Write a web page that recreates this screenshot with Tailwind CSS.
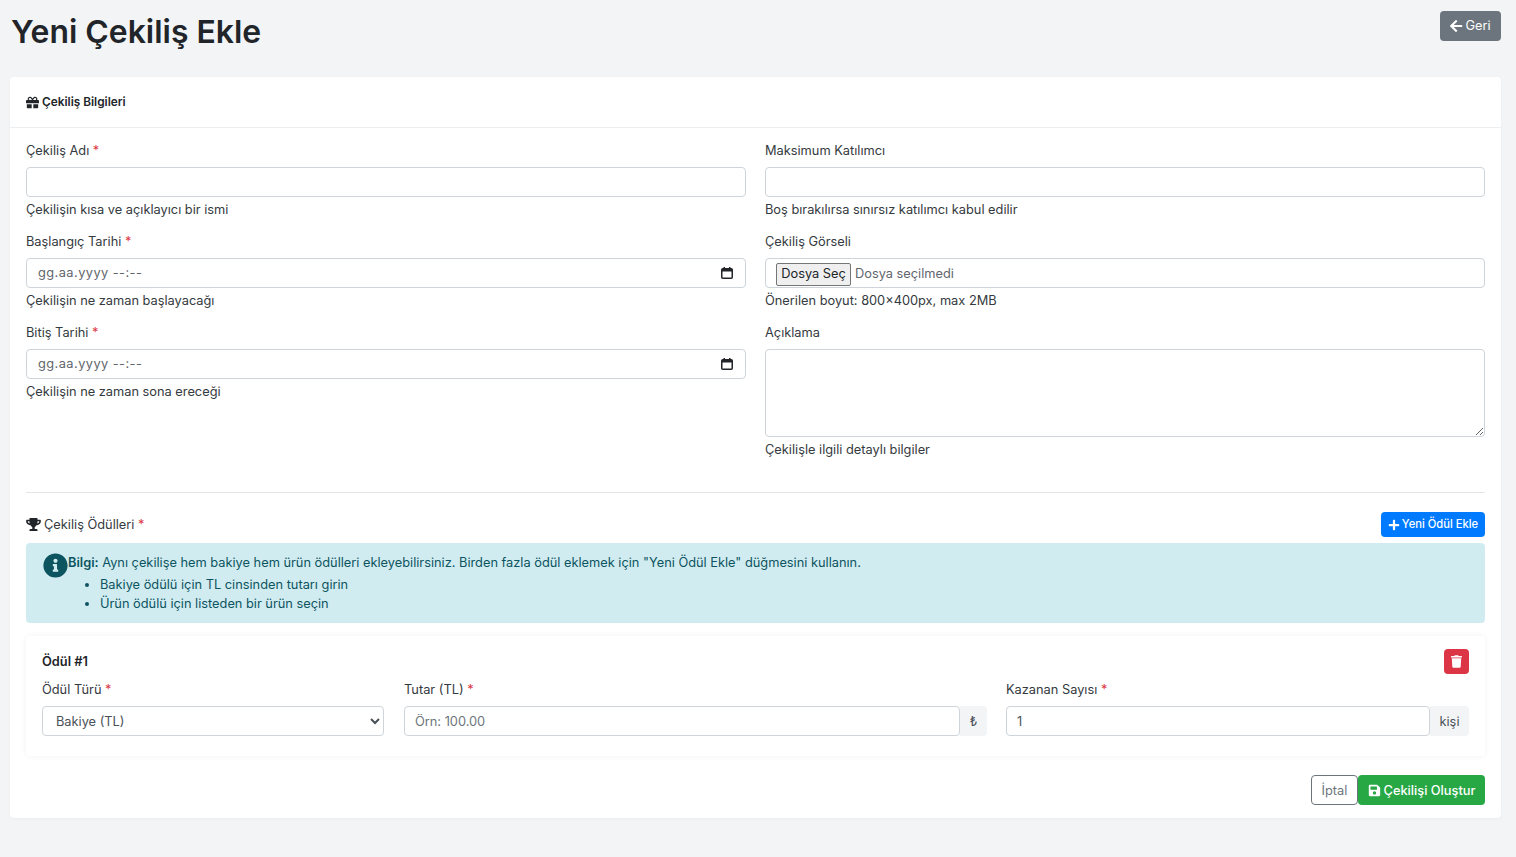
<!DOCTYPE html>
<html lang="tr">
<head>
  <meta charset="UTF-8">
  <title>Yeni Çekiliş Ekle</title>
  <script src="https://cdn.jsdelivr.net/npm/@tailwindcss/browser@4"></script>
</head>
<body class="bg-[#f3f4f6] min-h-screen font-['Inter',sans-serif] text-[12.8px] text-[#343a40]">
  <div class="pl-[10px] pr-[15px] h-[857px] overflow-hidden">
    <!-- page header -->
    <div class="flex justify-between items-start h-[77px]">
      <h1 class="text-[31.9px] leading-[38px] font-semibold text-[#212529] mt-[13px] pl-[1px]">Yeni Çekiliş Ekle</h1>
      <a href="#" class="mt-[11px] h-[30px] w-[61px] bg-[#6c757d] text-white rounded-[4px] flex items-center justify-center gap-[3px]">
        <svg class="w-[12.25px] h-[14px] fill-current" viewBox="0 0 448 512"><path d="M257.5 445.1l-22.2 22.2c-9.4 9.4-24.6 9.4-33.9 0L7 273c-9.4-9.4-9.4-24.6 0-33.9L201.4 44.7c9.4-9.4 24.6-9.4 33.9 0l22.2 22.2c9.5 9.5 9.3 25-.4 34.3L136.6 216H424c13.3 0 24 10.7 24 24v32c0 13.3-10.7 24-24 24H136.6l120.5 114.8c9.8 9.3 10 24.8.4 34.3z"/></svg>
        Geri
      </a>
    </div>

    <div class="bg-white rounded-[4px] shadow-[0_1px_3px_rgba(0,0,0,0.04)] h-[741px]">
      <div class="h-[51px] border-b border-[#edeef0] px-[16px] pt-[1px] flex items-center gap-[3px] text-[11.84px] font-semibold text-[#212529]">
        <svg class="w-[13px] h-[13px] fill-current" viewBox="0 0 512 512"><path d="M32 448c0 17.7 14.3 32 32 32h160V320H32v128zm256 32h160c17.7 0 32-14.3 32-32V320H288v160zm192-320h-42.1c6.2-12.1 10.1-25.5 10.1-40 0-48.5-39.5-88-88-88-41.6 0-68.5 21.3-103 68.3-34.5-47-61.4-68.3-103-68.3-48.5 0-88 39.5-88 88 0 14.5 3.8 27.9 10.1 40H32c-17.7 0-32 14.3-32 32v80c0 8.8 7.2 16 16 16h480c8.8 0 16-7.2 16-16v-80c0-17.7-14.3-32-32-32zm-326.1 0c-22.1 0-40-17.9-40-40s17.9-40 40-40c19.9 0 34.6 3.3 86.1 80h-86.1zm206.1 0h-86.1c51.4-76.5 65.7-80 86.1-80 22.1 0 40 17.9 40 40s-17.9 40-40 40z"/></svg>
        Çekiliş Bilgileri
      </div>

      <div class="px-[16px] pt-[13px]">
        <div class="grid grid-cols-2 gap-x-[19px] h-[351px]">
          <!-- left column -->
          <div>
            <div class="h-[91px]">
              <label class="block h-[18px] leading-[20px] mb-[8px]">Çekiliş Adı <span class="text-[#dc3545]">*</span></label>
              <input type="text" class="block w-full h-[30px] bg-white border border-[#ced4da] rounded-[4px] px-[11px]">
              <div class="mt-[3px] leading-[20px]">Çekilişin kısa ve açıklayıcı bir ismi</div>
            </div>
            <div class="h-[91px]">
              <label class="block h-[18px] leading-[20px] mb-[8px]">Başlangıç Tarihi <span class="text-[#dc3545]">*</span></label>
              <div class="flex items-center justify-between h-[30px] border border-[#ced4da] rounded-[4px] pl-[11px] pr-[12px] text-[#5f666d]">
                <span class="tracking-[0.45px]">gg.aa.yyyy --:--</span>
                <svg class="w-[12px] h-[12px]" viewBox="0 0 12 12"><rect x="0.75" y="1.75" width="10.5" height="9.5" rx="1" fill="none" stroke="#212529" stroke-width="1.5"/><rect x="1" y="2" width="10" height="2.5" fill="#212529"/><rect x="2.5" y="0" width="1.5" height="2" fill="#212529"/><rect x="8" y="0" width="1.5" height="2" fill="#212529"/></svg>
              </div>
              <div class="mt-[3px] leading-[20px]">Çekilişin ne zaman başlayacağı</div>
            </div>
            <div class="h-[91px]">
              <label class="block h-[18px] leading-[20px] mb-[8px]">Bitiş Tarihi <span class="text-[#dc3545]">*</span></label>
              <div class="flex items-center justify-between h-[30px] border border-[#ced4da] rounded-[4px] pl-[11px] pr-[12px] text-[#5f666d]">
                <span class="tracking-[0.45px]">gg.aa.yyyy --:--</span>
                <svg class="w-[12px] h-[12px]" viewBox="0 0 12 12"><rect x="0.75" y="1.75" width="10.5" height="9.5" rx="1" fill="none" stroke="#212529" stroke-width="1.5"/><rect x="1" y="2" width="10" height="2.5" fill="#212529"/><rect x="2.5" y="0" width="1.5" height="2" fill="#212529"/><rect x="8" y="0" width="1.5" height="2" fill="#212529"/></svg>
              </div>
              <div class="mt-[3px] leading-[20px]">Çekilişin ne zaman sona ereceği</div>
            </div>
          </div>
          <!-- right column -->
          <div>
            <div class="h-[91px]">
              <label class="block h-[18px] leading-[20px] mb-[8px]">Maksimum Katılımcı</label>
              <input type="text" class="block w-full h-[30px] bg-white border border-[#ced4da] rounded-[4px] px-[11px]">
              <div class="mt-[3px] leading-[20px]">Boş bırakılırsa sınırsız katılımcı kabul edilir</div>
            </div>
            <div class="h-[91px]">
              <label class="block h-[18px] leading-[20px] mb-[8px]">Çekiliş Görseli</label>
              <div class="flex items-center h-[30px] border border-[#ced4da] rounded-[4px] pl-[10px] pt-[2px] text-[#5f666d]">
                <button type="button" class="h-[23px] w-[75px] bg-[#efefef] border border-[#767676] rounded-[2px] text-[#212529] text-center">Dosya Seç</button>
                <span class="ml-[4px]">Dosya seçilmedi</span>
              </div>
              <div class="mt-[3px] leading-[20px]">Önerilen boyut: 800×400px, max 2MB</div>
            </div>
            <div>
              <label class="block h-[18px] leading-[20px] mb-[8px]">Açıklama</label>
              <textarea class="block w-full h-[88px] border border-[#ced4da] rounded-[4px] px-[11px] py-[5px]"></textarea>
              <div class="mt-[3px] leading-[20px]">Çekilişle ilgili detaylı bilgiler</div>
            </div>
          </div>
        </div>

        <hr class="border-[#e3e5e7]">

        <div class="flex justify-between items-center mt-[19px] h-[25px]">
          <div class="flex items-center gap-[3px] text-[#343a40]">
            <svg class="w-[15px] h-[13px] fill-[#212529]" viewBox="0 0 576 512"><path d="M552 64H448V24c0-13.3-10.7-24-24-24H152c-13.3 0-24 10.7-24 24v40H24C10.7 64 0 74.7 0 88v56c0 35.7 22.5 72.4 61.9 100.7 31.5 22.7 69.8 37.1 110 41.7C203.3 338.5 240 360 240 360v72h-48c-35.3 0-64 20.7-64 56v12c0 6.6 5.4 12 12 12h296c6.6 0 12-5.4 12-12v-12c0-35.3-28.7-56-64-56h-48v-72s36.7-21.5 68.1-73.6c40.3-4.6 78.6-19 110-41.7 39.3-28.3 61.9-65 61.9-100.7V88c0-13.3-10.7-24-24-24zM99.3 192.8C74.9 175.2 64 155.6 64 144v-16h64.2c1 32.6 5.8 61.2 12.8 86.2-15.1-5.2-29.2-12.4-41.7-21.4zM512 144c0 16.1-17.7 36.1-35.3 48.8-12.5 9-26.7 16.2-41.8 21.4 7-25 11.8-53.6 12.8-86.2H512v16z"/></svg>
            <span>Çekiliş Ödülleri <span class="text-[#dc3545]">*</span></span>
          </div>
          <button type="button" class="h-[25px] w-[104px] bg-[#007bff] text-white text-[11.2px] font-medium rounded-[4px] flex items-center justify-center gap-[2px]">
            <svg class="w-[12px] h-[12px] fill-current" viewBox="0 0 448 512"><path d="M416 208H272V64c0-17.67-14.33-32-32-32h-32c-17.67 0-32 14.33-32 32v144H32c-17.67 0-32 14.33-32 32v32c0 17.67 14.33 32 32 32h144v144c0 17.67 14.33 32 32 32h32c17.67 0 32-14.33 32-32V304h144c17.67 0 32-14.33 32-32v-32c0-17.67-14.33-32-32-32z"/></svg>
            Yeni Ödül Ekle
          </button>
        </div>

        <!-- info alert -->
        <div class="mt-[6px] h-[80px] bg-[#d1ecf1] text-[#0c5460] rounded-[4px] pl-[17px] pt-[10px] flex items-start">
          <svg class="w-[25px] h-[25px] shrink-0 fill-current" viewBox="0 0 512 512"><path d="M256 8C119.043 8 8 119.083 8 256c0 136.997 111.043 248 248 248s248-111.003 248-248C504 119.083 392.957 8 256 8zm0 110c23.196 0 42 18.804 42 42s-18.804 42-42 42-42-18.804-42-42 18.804-42 42-42zm56 254c0 6.627-5.373 12-12 12h-88c-6.627 0-12-5.373-12-12v-24c0-6.627 5.373-12 12-12h12v-64h-12c-6.627 0-12-5.373-12-12v-24c0-6.627 5.373-12 12-12h64c6.627 0 12 5.373 12 12v100h12c6.627 0 12 5.373 12 12v24z"/></svg>
          <div>
            <div class="leading-[20px]"><strong class="font-semibold">Bilgi:</strong> Aynı çekilişe hem bakiye hem ürün ödülleri ekleyebilirsiniz. Birden fazla ödül eklemek için "Yeni Ödül Ekle" düğmesini kullanın.</div>
            <ul class="list-disc pl-[32px] mt-[2px] leading-[19px]">
              <li>Bakiye ödülü için TL cinsinden tutarı girin</li>
              <li>Ürün ödülü için listeden bir ürün seçin</li>
            </ul>
          </div>
        </div>

        <!-- prize card -->
        <div class="mt-[13px] h-[120px] rounded-[4px] shadow-[0_0_6px_rgba(0,0,0,0.06)] px-[16px] pt-[13px]">
          <div class="flex justify-between items-center h-[25px]">
            <span class="font-semibold text-[#212529]">Ödül #1</span>
            <button type="button" class="w-[25px] h-[25px] bg-[#dc3545] text-white rounded-[4px] flex items-center justify-center">
              <svg class="w-[11px] h-[13px] fill-current" viewBox="0 0 448 512"><path d="M432 32H312l-9.4-18.7A24 24 0 0 0 281.1 0H166.8a23.72 23.72 0 0 0-21.4 13.3L136 32H16A16 16 0 0 0 0 48v32a16 16 0 0 0 16 16h416a16 16 0 0 0 16-16V48a16 16 0 0 0-16-16zM53.2 467a48 48 0 0 0 47.9 45h245.8a48 48 0 0 0 47.9-45L416 128H32z"/></svg>
            </button>
          </div>
          <div class="flex mt-[6px]">
            <div class="w-[342px] mr-[20px]">
              <label class="block h-[18px] leading-[20px] mb-[8px]">Ödül Türü <span class="text-[#dc3545]">*</span></label>
              <select class="block w-full h-[30px] bg-white border border-[#ced4da] rounded-[4px] pl-[9px] text-[#495057]">
                <option>Bakiye (TL)</option>
              </select>
            </div>
            <div class="w-[583px] mr-[19px]">
              <label class="block h-[18px] leading-[20px] mb-[8px]">Tutar (TL) <span class="text-[#dc3545]">*</span></label>
              <div class="flex h-[30px]">
                <input type="text" placeholder="Örn: 100.00" class="flex-1 min-w-0 border border-[#ced4da] rounded-[4px] px-[10px] pt-[1px] placeholder:text-[#6c757d]">
                <span class="w-[27px] pt-[1px] bg-[#f3f4f6] rounded-r-[4px] flex items-center justify-center text-[#495057]">₺</span>
              </div>
            </div>
            <div class="flex-1">
              <label class="block h-[18px] leading-[20px] mb-[8px]">Kazanan Sayısı <span class="text-[#dc3545]">*</span></label>
              <div class="flex h-[30px]">
                <input type="text" value="1" class="flex-1 min-w-0 border border-[#ced4da] rounded-[4px] px-[10px] pt-[1px] text-[#495057]">
                <span class="w-[39px] pt-[1px] bg-[#f3f4f6] rounded-r-[4px] flex items-center justify-center text-[#495057]">kişi</span>
              </div>
            </div>
          </div>
        </div>

        <!-- actions -->
        <div class="flex justify-end mt-[19px]">
          <button type="button" class="h-[30px] pt-[1px] w-[47px] bg-white border border-[#6c757d] rounded-[4px] text-[#6c757d]">İptal</button>
          <button type="button" class="h-[30px] pt-[1px] w-[127px] bg-[#28a745] text-white font-medium rounded-[4px] flex items-center justify-center gap-[3px]">
            <svg class="w-[13px] h-[13px] fill-current" viewBox="0 0 448 512"><path d="M433.941 129.941l-83.882-83.882A48 48 0 0 0 316.118 32H48C21.49 32 0 53.49 0 80v352c0 26.51 21.49 48 48 48h352c26.51 0 48-21.49 48-48V163.882a48 48 0 0 0-14.059-33.941zM224 416c-35.346 0-64-28.654-64-64 0-35.346 28.654-64 64-64s64 28.654 64 64c0 35.346-28.654 64-64 64zm96-304.52V212c0 6.627-5.373 12-12 12H76c-6.627 0-12-5.373-12-12V108c0-6.627 5.373-12 12-12h228.52c3.183 0 6.235 1.264 8.485 3.515l3.48 3.48A11.996 11.996 0 0 1 320 111.48z"/></svg>
            Çekilişi Oluştur
          </button>
        </div>
      </div>
    </div>
  </div>
</body>
</html>
